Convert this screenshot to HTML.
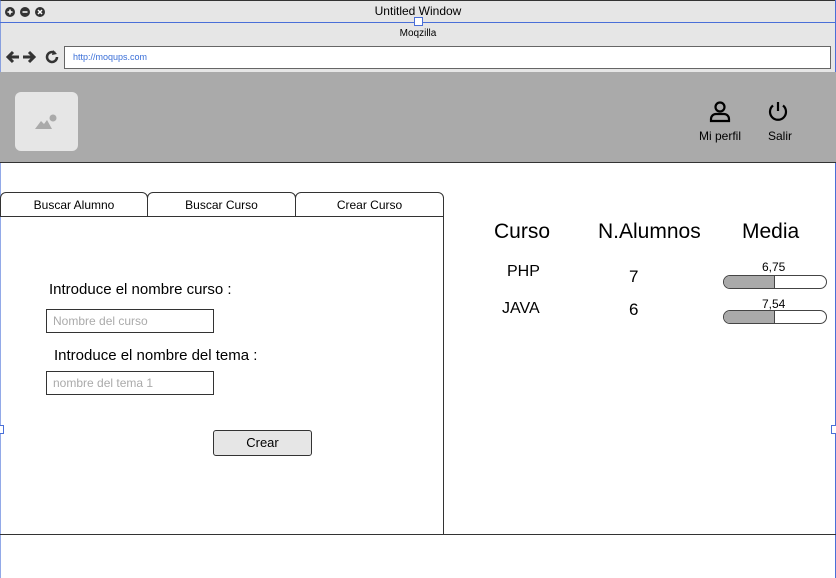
<!DOCTYPE html>
<html><head><style>
*{margin:0;padding:0;box-sizing:border-box}
body{width:836px;height:578px;position:relative;overflow:hidden;background:#fff;font-family:"Liberation Sans",sans-serif;color:#000}
.a{position:absolute}
.tab{position:absolute;top:192px;height:25px;border:1px solid #333;border-radius:6px 6px 0 0;background:#fff;font-size:12px;text-align:center;line-height:24px}
.inp{position:absolute;left:46px;width:168px;height:24px;border:1px solid #333;font-size:12px;color:#aaa;padding-left:6px;line-height:22px}
.bar{position:absolute;left:723px;width:104px;height:14px;border:1px solid #444;border-radius:7px;overflow:hidden;background:#fff}
.bar div{width:51px;height:100%;background:#aaa;border-right:1px solid #444}
</style></head><body>
<div class="a" style="left:0;top:0;width:836px;height:72px;background:#e6e6e6;border-top:1px solid #333"></div>
<div class="a" style="left:0;top:22px;width:836px;height:1px;background:#4a6fd8"></div>
<div class="a" style="left:0;top:0;width:1px;height:578px;background:#4a6fd8;opacity:.6"></div>
<div class="a" style="left:835px;top:0;width:1px;height:578px;background:#4a6fd8"></div>
<svg class="a" style="left:4px;top:6px" width="44" height="12">
<circle cx="6" cy="6" r="5" fill="#333"/><path d="M3.5 6h5M6 3.5v5" stroke="#fff" stroke-width="1.5"/>
<circle cx="21" cy="6" r="5" fill="#333"/><path d="M18.5 6h5" stroke="#fff" stroke-width="1.5"/>
<circle cx="36" cy="6" r="5" fill="#333"/><path d="M34 4l4 4M38 4l-4 4" stroke="#fff" stroke-width="1.5"/></svg>
<div class="a" style="left:0;width:836px;top:4px;text-align:center;font-size:12px">Untitled Window</div>
<div class="a" style="left:414px;top:17px;width:9px;height:9px;border:1px solid #4a6fd8;background:#fff"></div>
<div class="a" style="left:0;width:836px;top:28px;text-align:center;font-size:10px">Moqzilla</div>
<svg class="a" style="left:5px;top:49px" width="56" height="16">
<path d="M14 8H3M8 3L3 8l5 5" stroke="#333" stroke-width="3" fill="none"/>
<path d="M18 8h11M24 3l5 5-5 5" stroke="#333" stroke-width="3" fill="none"/>
<path d="M52 8a5 5 0 1 1-2-4" stroke="#333" stroke-width="2.5" fill="none"/><path d="M48 1l4 4-5 1z" fill="#333"/></svg>
<div class="a" style="left:64px;top:46px;width:767px;height:23px;border:1px solid #666;background:#fff;font-size:9px;color:#3a6fd8;padding-left:8px;line-height:21px">http://moqups.com</div>
<div class="a" style="left:0;top:72px;width:836px;height:91px;background:#aaa;border-bottom:1px solid #333"></div>
<div class="a" style="left:15px;top:92px;width:63px;height:59px;background:#e6e6e6;border-radius:6px"></div>
<svg class="a" style="left:34px;top:112px" width="26" height="20"><path d="M1 17l6-8 3 3 3-4 5 9z" fill="#aaa"/><circle cx="19" cy="6" r="3.5" fill="#aaa"/></svg>
<svg class="a" style="left:708px;top:100px" width="24" height="24"><circle cx="12" cy="7" r="4.5" stroke="#000" stroke-width="2.2" fill="none"/><path d="M3 21v-2a5 5 0 0 1 5-5h8a5 5 0 0 1 5 5v2z" stroke="#000" stroke-width="2.2" fill="none"/></svg>
<div class="a" style="left:699px;top:129px;font-size:12px">Mi perfil</div>
<svg class="a" style="left:766px;top:100px" width="24" height="24"><path d="M12 2v9" stroke="#000" stroke-width="2.2"/><path d="M7 5.5a8 8 0 1 0 10 0" stroke="#000" stroke-width="2.2" fill="none"/></svg>
<div class="a" style="left:768px;top:129px;font-size:12px">Salir</div>
<div class="tab" style="left:0;width:148px">Buscar Alumno</div>
<div class="tab" style="left:147px;width:149px">Buscar Curso</div>
<div class="tab" style="left:295px;width:149px">Crear Curso</div>
<div class="a" style="left:0;top:216px;width:444px;height:319px;border:1px solid #333;border-left:none"></div>
<div class="a" style="left:0;top:534px;width:836px;height:1px;background:#333"></div>
<div class="a" style="left:49px;top:281px;font-size:15px">Introduce el nombre curso :</div>
<div class="inp" style="top:309px">Nombre del curso</div>
<div class="a" style="left:54px;top:347px;font-size:15px">Introduce el nombre del tema :</div>
<div class="inp" style="top:371px">nombre del tema 1</div>
<div class="a" style="left:213px;top:430px;width:99px;height:26px;border:1px solid #333;border-radius:3px;background:#e6e6e6;font-size:13px;text-align:center;line-height:24px">Crear</div>
<div class="a" style="left:494px;top:220px;font-size:21px">Curso</div>
<div class="a" style="left:598px;top:220px;font-size:21px">N.Alumnos</div>
<div class="a" style="left:742px;top:220px;font-size:21px">Media</div>
<div class="a" style="left:507px;top:263px;font-size:16px">PHP</div>
<div class="a" style="left:629px;top:267px;font-size:17px">7</div>
<div class="a" style="left:502px;top:300px;font-size:16px">JAVA</div>
<div class="a" style="left:629px;top:300px;font-size:17px">6</div>
<div class="a" style="left:762px;top:260px;font-size:12px">6,75</div>
<div class="bar" style="top:275px"><div></div></div>
<div class="a" style="left:762px;top:297px;font-size:12px">7,54</div>
<div class="bar" style="top:310px"><div></div></div>
<div class="a" style="left:-4px;top:425px;width:8px;height:9px;border:1px solid #4a6fd8;background:#fff"></div>
<div class="a" style="left:831px;top:425px;width:8px;height:9px;border:1px solid #4a6fd8;background:#fff"></div>
</body></html>
